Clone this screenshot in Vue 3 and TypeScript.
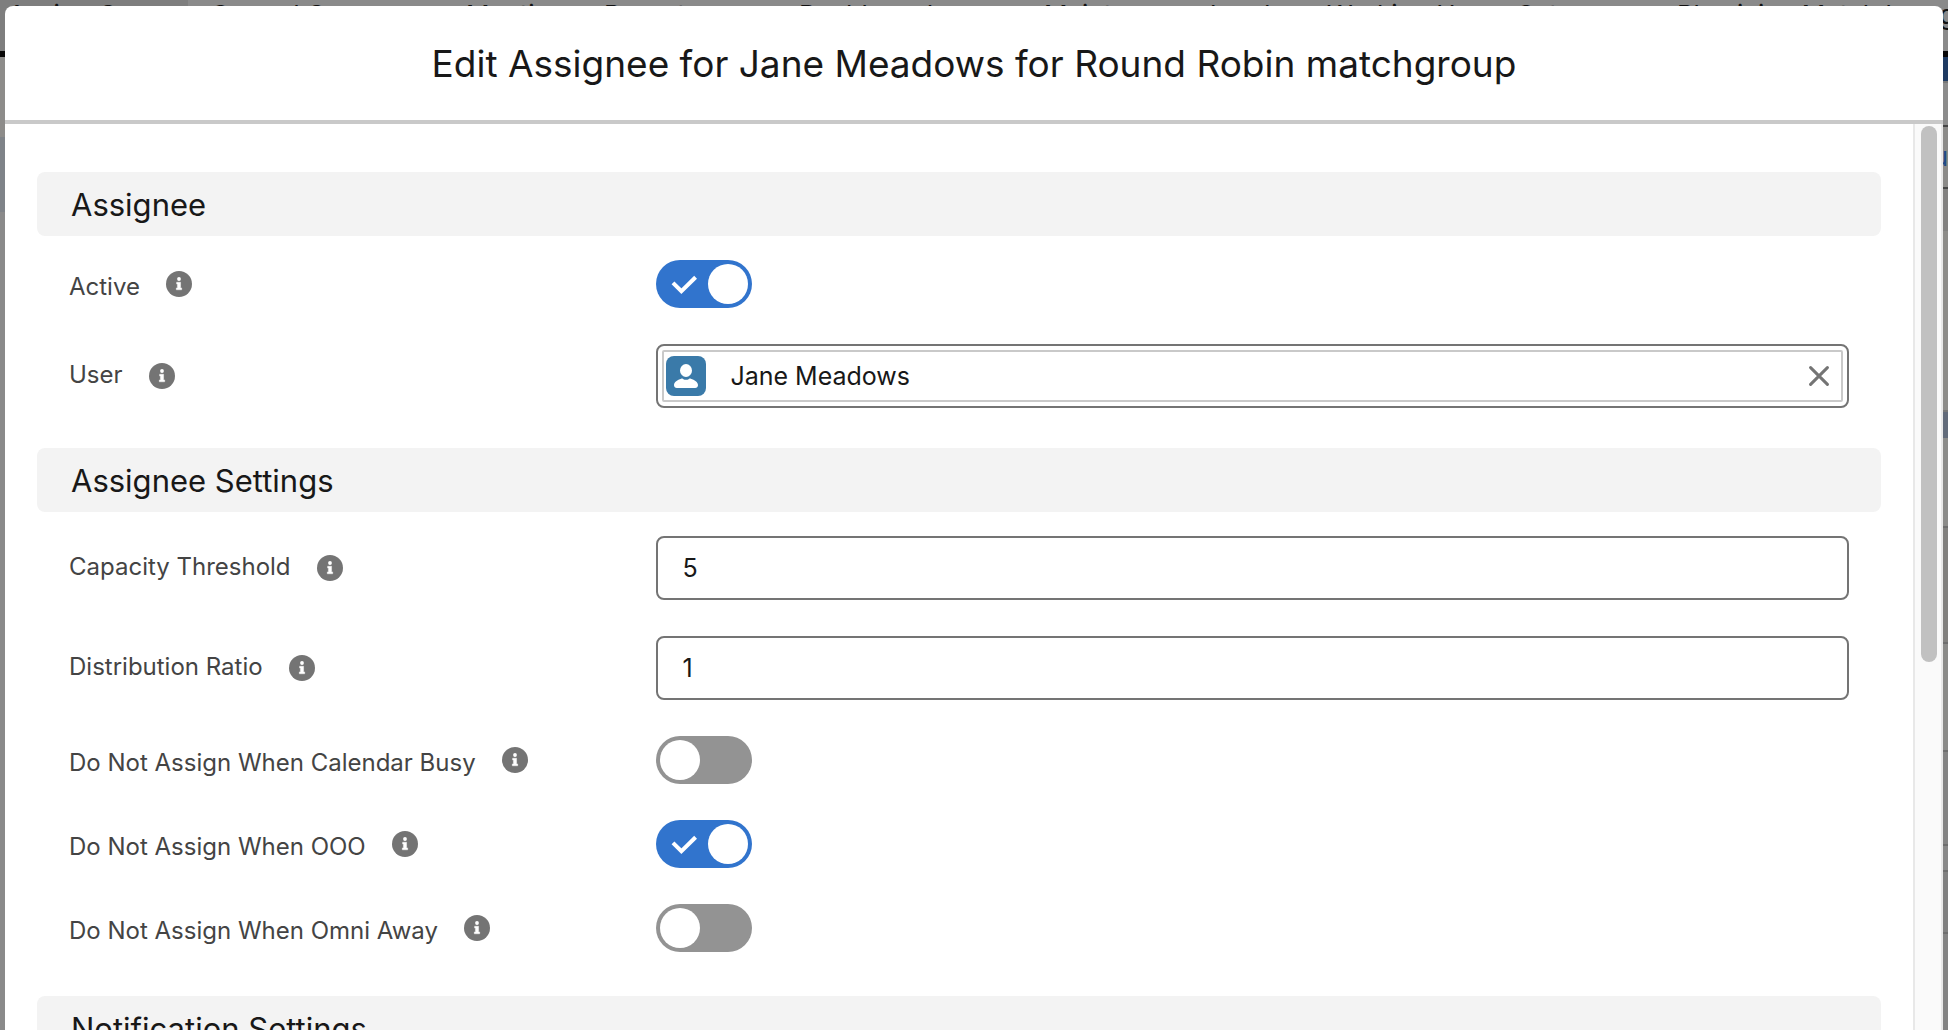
<script setup lang="ts">
import { reactive } from 'vue'

interface Field {
  id: string
  label: string
  kind: 'toggle' | 'lookup' | 'text'
  on?: boolean
  value?: string
}

interface Section {
  title: string
  fields: Field[]
}

interface Band {
  height: number
  color: string
  text?: string
}

const title = 'Edit Assignee for Jane Meadows for Round Robin matchgroup'

const sections = reactive<Section[]>([
  {
    title: 'Assignee',
    fields: [
      { id: 'active', label: 'Active', kind: 'toggle', on: true },
      { id: 'user', label: 'User', kind: 'lookup', value: 'Jane Meadows' },
    ],
  },
  {
    title: 'Assignee Settings',
    fields: [
      { id: 'capacity', label: 'Capacity Threshold', kind: 'text', value: '5' },
      { id: 'ratio', label: 'Distribution Ratio', kind: 'text', value: '1' },
      { id: 'calendar', label: 'Do Not Assign When Calendar Busy', kind: 'toggle', on: false },
      { id: 'ooo', label: 'Do Not Assign When OOO', kind: 'toggle', on: true },
      { id: 'omni', label: 'Do Not Assign When Omni Away', kind: 'toggle', on: false },
    ],
  },
  { title: 'Notification Settings', fields: [] },
])

// Tabs of the page that lies under the dialog
const tabs = [
  'Assign Group',
  'Scored Groups',
  'Meetings',
  'Reports',
  'Dashboards',
  'Maintenance Leads',
  'Working Hours Setup',
  'Physician Match logpg',
]

const leftBands: Band[] = [
  { height: 6, color: '#080707' },
  { height: 80, color: '#8d8c8a' },
  { height: 75, color: '#7f8388' },
  { height: 818, color: '#8a8a8a' },
]

const rightBands: Band[] = [
  { height: 6, color: '#080707' },
  { height: 24, color: '#1f3b63' },
  { height: 2, color: '#777777' },
  { height: 42, color: '#8c8c8c' },
  { height: 2, color: '#464646' },
  { height: 60, color: '#8b8a88', text: 'u' },
  { height: 2, color: '#464646' },
  { height: 42, color: '#828180' },
  { height: 179, color: '#8d8c89' },
  { height: 2, color: '#777777' },
  { height: 26, color: '#626b7a' },
  { height: 88, color: '#8b8b89' },
  { height: 2, color: '#6e6e6e' },
  { height: 114, color: '#81807e' },
  { height: 2, color: '#6e6e6e' },
  { height: 106, color: '#8a8a88' },
  { height: 2, color: '#6e6e6e' },
  { height: 92, color: '#838383' },
  { height: 2, color: '#6e6e6e' },
  { height: 24, color: '#888888' },
  { height: 2, color: '#6e6e6e' },
  { height: 60, color: '#808080' },
  { height: 2, color: '#6e6e6e' },
  { height: 96, color: '#838383' },
]
</script>

<template>
  <div class="page">
    <div class="backdrop" aria-hidden="true">
      <div class="tabs">
        <span v-for="(tab, i) in tabs" :key="tab" class="tab" :class="{ current: i === 0 }">{{ tab }}</span>
      </div>
      <div class="rails">
        <div class="rail">
          <div v-for="(b, i) in leftBands" :key="i" :style="{ height: b.height + 'px', background: b.color }"></div>
        </div>
        <div class="rail">
          <div v-for="(b, i) in rightBands" :key="i" class="band" :style="{ height: b.height + 'px', background: b.color }">{{ b.text }}</div>
        </div>
      </div>
    </div>

    <section class="modal" role="dialog" aria-labelledby="dialog-title">
      <header class="head">
        <h1 id="dialog-title">{{ title }}</h1>
      </header>
      <div class="body">
        <form class="content" @submit.prevent>
          <div v-for="section in sections" :key="section.title" class="group">
            <h2>{{ section.title }}</h2>
            <div v-if="section.fields.length" class="rows">
              <div v-for="f in section.fields" :key="f.id" class="row" :class="f.kind">
                <div class="caption">
                  <label :for="f.id">{{ f.label }}</label>
                  <button type="button" class="info" :aria-label="'About ' + f.label">
                    <svg viewBox="0 0 26 26" width="26" height="26">
                      <circle cx="13" cy="13" r="13" fill="#747474" />
                      <circle cx="13" cy="8" r="1.9" fill="#fff" />
                      <path d="M10.6 11.2h4v5.7h1.1v1.9h-5.4v-1.9h1.1v-3.8h-.8z" fill="#fff" stroke="#fff" stroke-width=".4" stroke-linejoin="round" />
                    </svg>
                  </button>
                </div>

                <div v-if="f.kind === 'toggle'" class="switch">
                  <input :id="f.id" v-model="f.on" type="checkbox" role="switch" />
                  <svg v-if="f.on" class="check" viewBox="0 0 96 48" width="96" height="48">
                    <path d="M17 22.8l8.4 8.4L39.6 17.3" fill="none" stroke="#fff" stroke-width="4" />
                  </svg>
                </div>

                <div v-else-if="f.kind === 'lookup'" class="lookup-box">
                  <div class="pill">
                    <svg class="avatar" viewBox="0 0 40 40" width="40" height="40">
                      <rect width="40" height="40" rx="8" fill="#3a7aa9" />
                      <ellipse cx="20" cy="14.5" rx="6" ry="6.5" fill="#fff" />
                      <path d="M8 29.2c0-3.6 3.5-5.2 7.2-6.5.7-.2 1.3-.1 1.8.2a5.6 5.6 0 0 0 6 0c.5-.3 1.1-.4 1.8-.2 3.7 1.3 7.2 2.9 7.2 6.5 0 1.6-1.2 2.8-2.8 2.8H10.8C9.2 32 8 30.8 8 29.2z" fill="#fff" />
                    </svg>
                    <input :id="f.id" v-model="f.value" type="text" readonly />
                    <button type="button" class="clear" aria-label="Clear selection">
                      <svg viewBox="0 0 20 20" width="20" height="20">
                        <path d="M1.6 1.6l16.8 16.8M18.4 1.6L1.6 18.4" fill="none" stroke="#747474" stroke-width="3" stroke-linecap="round" />
                      </svg>
                    </button>
                  </div>
                </div>

                <input v-else :id="f.id" v-model="f.value" class="field" type="text" />
              </div>
            </div>
          </div>
        </form>
        <div class="track"><div class="thumb"></div></div>
      </div>
    </section>
  </div>
</template>

<style>
body {
  margin: 0;
}
</style>

<style scoped>
.page {
  position: relative;
  height: 100vh;
  overflow: hidden;
  box-sizing: border-box;
  padding: 6px 5px 0;
  display: flex;
  font-family: Inter, "Liberation Sans", sans-serif;
  color: #181818;
}

.backdrop {
  position: absolute;
  inset: 0;
  overflow: hidden;
  background: #8a8a8a;
}

.tabs {
  display: grid;
  grid-template-columns: 188fr 254fr 138fr 195fr 245fr 283fr 350fr 295fr;
  height: 51px;
  font-size: 26px;
  line-height: 30px;
  white-space: nowrap;
  color: #111;
}

.tab {
  min-width: 0;
  padding-left: 24px;
}

.tab.current {
  padding-left: 8px;
  background: #7e7e7e;
}

.rails {
  display: flex;
  justify-content: space-between;
}

.rail {
  width: 16px;
}

.band {
  overflow: hidden;
  font-size: 26px;
  line-height: 60px;
  text-align: right;
  color: #1f4a86;
}

.modal {
  position: relative;
  flex: 1;
  min-width: 0;
  display: flex;
  flex-direction: column;
  overflow: hidden;
  background: #fff;
  border-radius: 8px 8px 0 0;
}

.head {
  flex: none;
  padding: 34px 32px 32px;
  border-bottom: 4px solid #c9c9c9;
  text-align: center;
}

h1 {
  margin: 0;
  font-size: 37px;
  line-height: 48px;
  font-weight: 400;
}

.body {
  flex: 1;
  min-height: 0;
  display: flex;
}

.content {
  flex: 1;
  min-width: 0;
  overflow: hidden;
  padding: 48px 32px 0;
}

h2 {
  margin: 0;
  padding: 2px 34px 0;
  border-radius: 8px;
  background: #f3f3f3;
  font-size: 31px;
  line-height: 62px;
  font-weight: 400;
}

.rows {
  display: flex;
  flex-direction: column;
  gap: 36px;
  padding: 24px 32px 40px;
}

.row {
  display: grid;
  grid-template-columns: 33fr 67fr;
  align-items: center;
}

.toggle:last-child {
  margin-bottom: 4px;
}

.caption {
  display: flex;
  align-items: center;
  gap: 26px;
}

label {
  font-size: 24px;
  line-height: 32px;
  color: #444;
  padding-bottom: 2px;
}

.toggle label {
  padding: 6px 0 0;
}

button {
  display: flex;
  padding: 0;
  border: 0;
  background: none;
}

.switch {
  position: relative;
  width: 96px;
  height: 48px;
}

.switch input {
  appearance: none;
  display: block;
  box-sizing: border-box;
  width: 96px;
  height: 48px;
  margin: 0;
  padding: 4px;
  border-radius: 24px;
  background: #939393;
}

.switch input::before {
  content: "";
  display: block;
  width: 40px;
  height: 40px;
  border-radius: 50%;
  background: #fff;
}

.switch input:checked {
  background: #3174cd;
}

.switch input:checked::before {
  margin-left: auto;
}

.check {
  position: absolute;
  inset: 0;
  pointer-events: none;
}

.field,
.lookup-box {
  box-sizing: border-box;
  width: 100%;
  height: 64px;
  border: 2px solid #747474;
  border-radius: 8px;
  background: #fff;
}

.field,
.pill input {
  font-family: inherit;
  font-size: 25px;
  color: #181818;
}

.field {
  padding: 0 24px;
}

.lookup-box {
  display: flex;
  padding: 4px;
}

.pill {
  flex: 1;
  display: flex;
  align-items: center;
  padding: 0 12px 0 2px;
  border: 2px solid #c9c9c9;
  border-radius: 2px;
}

.pill input {
  flex: 1;
  min-width: 0;
  margin: 0 24px;
  padding: 0;
  border: 0;
  background: none;
}

.track {
  flex: none;
  box-sizing: border-box;
  width: 30px;
  padding: 2px 4px 0 6px;
  border: solid #e8e8e8;
  border-width: 0 2px;
  background: #fafafa;
}

.thumb {
  height: calc(60% - 6px);
  border-radius: 8px;
  background: #c1c1c1;
}
</style>
